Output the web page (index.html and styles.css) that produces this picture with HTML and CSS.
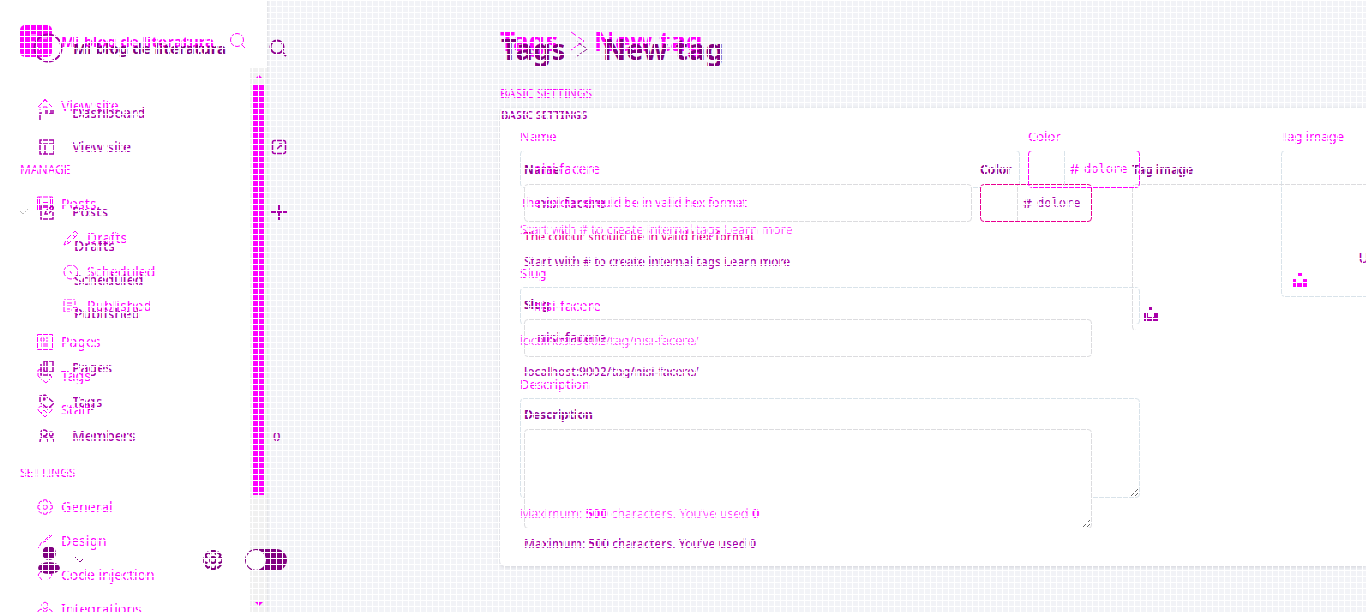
FILE: index.html
```html
<!DOCTYPE html>
<html lang="en">
<head>
<meta charset="utf-8">
<title>Tags - New tag</title>
<link rel="stylesheet" href="styles.css">
</head>
<body>
<svg width="0" height="0" class="defs" aria-hidden="true">
  <symbol id="search" viewBox="0 0 18 18"><circle cx="8" cy="8" r="6.5"/><path d="M13 13l4 4"/></symbol>
  <symbol id="home" viewBox="0 0 16 16"><path d="M1 9l7-7 7 7M4 6l4-5 4 5M3 9v3M6 11v-2h4v2"/></symbol>
  <symbol id="dash" viewBox="0 0 16 16"><path d="M1 15V8h3M7 5v4M9 5v4h3V5M12 9h2V5"/></symbol>
  <symbol id="layout" viewBox="0 0 16 16"><path d="M1 1h14v14H1zM1 5h14M6 5v10"/></symbol>
  <symbol id="post" viewBox="0 0 16 16"><path d="M.5 15V1h15v14M2.500 15V1M13.500 15V1M6 6.500h6M4 11.500h8"/></symbol>
  <symbol id="compose" viewBox="0 0 16 16"><path d="M9 2H2v13h12V8M6 10l1-3 6-5 2 2-6 6z"/></symbol>
  <symbol id="pencil" viewBox="0 0 16 16"><path d="M1 15l2-5 9-9 3 3-9 9zM3 10l3 3M9 4l3 3"/></symbol>
  <symbol id="clock" viewBox="0 0 16 16"><circle cx="8" cy="8" r="7"/><path d="M7 7l1 2h2"/></symbol>
  <symbol id="published" viewBox="0 0 16 16"><path d="M12 7V2H1v12h6M4 5h6M4 8h5M4 11h3"/><circle cx="12" cy="12" r="3"/></symbol>
  <symbol id="page" viewBox="0 0 16 16"><path d="M.5.5h15v15H.5zM4 4h3v3H4zM9 4h3M9 7h3M4 10h8M4 12h8"/></symbol>
  <symbol id="pages" viewBox="0 0 16 16"><path d="M5 1h9v11H5zM2 4v11h10M8 1v11"/></symbol>
  <symbol id="tag" viewBox="0 0 16 16"><path d="M1 8V2l5-1 9 8-6 6z"/><circle cx="5" cy="5" r="1"/></symbol>
  <symbol id="staff" viewBox="0 0 16 16"><path d="M1 8c0-4 5-5 7-1 2-4 7-3 7 1l-7 7zM4 11l3-3 3 3"/></symbol>
  <symbol id="members" viewBox="0 0 16 16"><circle cx="5" cy="5" r="3"/><path d="M1 14c0-7 8-7 8 0"/><circle cx="12" cy="6" r="2"/><path d="M11 10c3-1 4 1 4 4"/></symbol>
  <symbol id="cog" viewBox="0 0 16 16"><path d="M6.500.8h3l.6 2.200 2-1 2 2-1 2 2.200.6v3l-2.200.6 1 2-2 2-2-1-.6 2h-3l-.6-2-2 1-2-2 1-2-2-.6v-3l2-.6-1-2 2-2 2 1z"/><circle cx="8" cy="8" r="2.400"/></symbol>
  <symbol id="brush" viewBox="0 0 16 16"><path d="M7 8l7-7 1 1-7 7zM7 9c-4-1-3 4-6 6"/></symbol>
  <symbol id="code" viewBox="0 0 16 16"><path d="M5 3L1 8l4 5M11 3l4 5-4 5"/></symbol>
  <symbol id="modules" viewBox="0 0 16 16"><path d="M8 1l3 2v3L8 8 5 6V3zM4 8l3 2v3l-3 2-3-2v-3zM12 8l3 2v3l-3 2-3-2v-3z"/></symbol>
  <symbol id="external" viewBox="0 0 16 16"><rect x="1.500" y="1.500" width="13" height="13" rx="2"/><path d="M6 10l5-5M8 5h3v3"/></symbol>
  <symbol id="plus" viewBox="0 0 16 16"><path d="M8 0v16M0 8h16"/></symbol>
  <symbol id="down" viewBox="0 0 12 12"><path d="M1 3l5 5 5-5"/></symbol>
  <symbol id="right" viewBox="0 0 16 20"><path d="M1 1l13 9-13 9"/></symbol>
  <symbol id="camera" viewBox="0 0 14 14"><path d="M5 0h4v3H5zM0 6h4v4h6V6h4v8H0z"/></symbol>
</svg>

<div class="stage">
  <div class="screen old">
    <aside class="sidebar">
      <header class="brand">
        <svg class="logo" viewBox="0 0 32 32"><rect width="32" height="32" rx="5"/><path d="M11 10h5M11 17h4M23 13h4M17 22l3 3"/></svg>
        <strong>Mi blog de literatura</strong>
        <button class="icon-button" aria-label="Search"><svg class="icon"><use href="#search"/></svg></button>
      </header>
      <div class="scroller">
        <nav class="menu">
          <a href="#"><svg class="icon"><use href="#home"/></svg>View site</a>
          <h2>MANAGE</h2>
          <a href="#"><svg class="icon"><use href="#post"/></svg>Posts</a>
          <a href="#" class="sub"><svg class="icon"><use href="#pencil"/></svg>Drafts</a>
          <a href="#" class="sub"><svg class="icon"><use href="#clock"/></svg>Scheduled</a>
          <a href="#" class="sub last"><svg class="icon"><use href="#published"/></svg>Published</a>
          <a href="#"><svg class="icon"><use href="#page"/></svg>Pages</a>
          <a href="#"><svg class="icon"><use href="#tag"/></svg>Tags</a>
          <a href="#"><svg class="icon"><use href="#staff"/></svg>Staff</a>
          <h2 class="settings">SETTINGS</h2>
          <a href="#"><svg class="icon"><use href="#cog"/></svg>General</a>
          <a href="#"><svg class="icon"><use href="#brush"/></svg>Design</a>
          <a href="#"><svg class="icon"><use href="#code"/></svg>Code injection</a>
          <a href="#"><svg class="icon"><use href="#modules"/></svg>Integrations</a>
        </nav>
        <div class="scrollbar"><i class="arrow up"></i><i class="thumb"></i><i class="arrow"></i></div>
      </div>
    </aside>
    <main class="content">
      <h1><a href="#">Tags</a><svg class="crumb"><use href="#right"/></svg>New tag</h1>
      <h2 class="section">BASIC SETTINGS</h2>
      <form class="card">
        <div class="fields">
          <div class="pair">
            <div><label for="a-name">Name</label><div class="box"><input id="a-name" value="nisi facere"></div></div>
            <div><label for="a-color">Color</label><div class="box color"><span class="swatch"></span><span>#</span><input id="a-color" value="dolore"></div></div>
          </div>
          <p class="help first error">The colour should be in valid hex format</p>
          <p class="help">Start with # to create internal tags <a href="#">Learn more</a></p>
          <label class="next" for="a-slug">Slug</label><div class="box"><input id="a-slug" value="nisi-facere"></div>
          <p class="help first">localhost:9002/tag/nisi-facere/</p>
          <label class="next" for="a-desc">Description</label><div class="box area"><textarea id="a-desc"></textarea></div>
          <p class="help first">Maximum: <b>500</b> characters. You’ve used <b class="count">0</b></p>
        </div>
        <div class="picture"><label for="a-image">Tag image</label><button type="button" id="a-image" class="drop" aria-label="Tag image"><svg class="camera"><use href="#camera"/></svg></button></div>
      </form>
    </main>
  </div>

  <div class="screen new">
    <aside class="sidebar">
      <header class="brand">
        <svg class="ring" viewBox="0 0 30 30"><circle cx="15" cy="15" r="13.5"/></svg>
        <strong>Mi blog de literatura</strong>
        <button class="icon-button" aria-label="Search"><svg class="icon"><use href="#search"/></svg></button>
      </header>
      <nav class="menu">
        <a href="#"><svg class="icon"><use href="#dash"/></svg>Dashboard</a>
        <a href="#"><svg class="icon"><use href="#layout"/></svg>View site<svg class="icon end"><use href="#external"/></svg></a>
        <a href="#" class="group"><svg class="toggle"><use href="#down"/></svg><svg class="icon"><use href="#compose"/></svg>Posts<svg class="icon end plus"><use href="#plus"/></svg></a>
        <a href="#" class="sub">Drafts</a>
        <a href="#" class="sub">Scheduled</a>
        <a href="#" class="sub last">Published</a>
        <a href="#"><svg class="icon"><use href="#pages"/></svg>Pages</a>
        <a href="#"><svg class="icon"><use href="#tag"/></svg>Tags</a>
        <a href="#"><svg class="icon"><use href="#members"/></svg>Members<span class="end number">0</span></a>
      </nav>
      <footer class="account">
        <svg class="user" viewBox="0 0 24 30"><circle cx="12" cy="8" r="7"/><ellipse cx="12" cy="23" rx="11" ry="6"/></svg>
        <svg class="caret"><use href="#down"/></svg>
        <button class="icon-button gear" aria-label="Settings"><svg class="icon"><use href="#cog"/></svg></button>
        <input type="checkbox" class="switch" aria-label="Dark mode">
      </footer>
    </aside>
    <main class="content">
      <h1><a href="#">Tags</a><svg class="crumb"><use href="#right"/></svg>New tag</h1>
      <h2 class="section">BASIC SETTINGS</h2>
      <form class="card">
        <div class="fields">
          <div class="pair">
            <div><label for="b-name">Name</label><div class="box"><input id="b-name" value="nisi facere"></div></div>
            <div><label for="b-color">Color</label><div class="box color"><span class="swatch"></span><span>#</span><input id="b-color" value="dolore"></div></div>
          </div>
          <p class="help first error">The colour should be in valid hex format</p>
          <p class="help">Start with # to create internal tags <a href="#">Learn more</a></p>
          <label class="next" for="b-slug">Slug</label><div class="box"><input id="b-slug" value="nisi-facere"></div>
          <p class="help first">localhost:9002/tag/nisi-facere/</p>
          <label class="next" for="b-desc">Description</label><div class="box area"><textarea id="b-desc"></textarea></div>
          <p class="help first">Maximum: <b>500</b> characters. You’ve used <b class="count">0</b></p>
        </div>
        <div class="picture"><label for="b-image">Tag image</label><button type="button" id="b-image" class="drop">Upload tag image<svg class="camera"><use href="#camera"/></svg></button></div>
      </form>
    </main>
  </div>
</div>
</body>
</html>
```
FILE: styles.css
```css
* { box-sizing: border-box; }
body {
  margin: 0;
  height: 100vh;
  overflow: hidden;
  background: #f2f3f7;
  font: 14px/20px "Noto Sans", "Open Sans", sans-serif;
}
/* fine white mesh over the whole comparison */
body::after {
  content: "";
  position: fixed;
  inset: 0;
  z-index: 9;
  pointer-events: none;
  background:
    repeating-linear-gradient(90deg, #fff 0 1px, transparent 1px 6px),
    repeating-linear-gradient(#fff 0 1px, transparent 1px 6px);
}
.defs { position: absolute; }
h1, h2, p { margin: 0; }
a { color: inherit; text-decoration: none; }
button, input, textarea { font: inherit; color: inherit; border: 0; padding: 0; background: none; outline: 0; }

.stage { display: grid; grid-template: 100vh / 100%; overflow: hidden; }
.screen { grid-area: 1 / 1; display: grid; min-width: 0; height: 100vh; overflow: hidden; }
.old { grid-template-columns: 267px minmax(0, 1fr); color: #f0f; --line: #d9e3ea; }
.new { grid-template-columns: 320px minmax(0, 1fr); color: #a800a8; --line: #dcdcdf; font-weight: 500; }
.icon { width: 16px; height: 16px; flex: none; }
svg { fill: none; stroke: currentColor; }
.new .icon { stroke-width: 1.5; }

/* sidebar */
.sidebar { display: flex; flex-direction: column; min-height: 0; height: 100vh; }
.old .sidebar { background: #fff; box-shadow: 1px 0 2px #dfe0e4; }
.brand { display: flex; align-items: center; flex: none; }
.old .brand { height: 68px; padding: 14px 20px 0; gap: 9px; }
.new .brand { height: 96px; padding: 0 33px; gap: 10px; }
.brand strong { font-size: 15px; font-weight: 700; white-space: nowrap; }
.new .brand strong { color: #800080; }
.logo { width: 32px; height: 32px; fill: #f0f; stroke: #fff; flex: none; }
.logo rect { stroke: none; }
.ring { width: 30px; height: 30px; stroke: #a000a0; stroke-width: 2; flex: none; }
.icon-button { display: flex; margin-left: auto; }
.brand .icon { width: 18px; height: 18px; }
.new .brand .icon { stroke-width: 2; color: #900090; }
.scroller { display: flex; flex: 1; min-height: 0; }
.menu { flex: 1; min-width: 0; overflow: hidden; }
.old .menu { padding-top: 21px; }
.menu a { display: flex; align-items: center; height: 34px; gap: 8px; }
.old .menu a { padding-left: 37px; }
.old .menu .sub { padding-left: 63px; }
.old .menu .last { margin-bottom: 2px; }
.menu h2 { margin-top: 30px; padding-left: 20px; font-size: 12px; line-height: 34px; font-weight: 400; }
.menu .settings { margin-top: 29px; }
.new .menu { flex: none; }
.new .menu a { padding: 0 33px 0 39px; gap: 17px; }
.new .menu .group { margin-top: 31px; padding-left: 17px; gap: 10px; }
.new .group .icon { margin-right: 7px; }
.new .menu .sub { padding-left: 74px; }
.new .menu .last { margin-bottom: 20px; }
.menu .end { margin-left: auto; }
.new .group .end { margin-right: 0; }
.new .plus { stroke-width: 2; }
.number { width: 14px; font-size: 13px; }
.toggle { width: 12px; height: 12px; stroke: #bbb; }
.scrollbar { width: 17px; display: flex; flex-direction: column; align-items: center; background: #f1f1f1; }
.thumb { width: 11px; height: 410px; background: #f0f; }
.arrow { margin-top: auto; height: 17px; display: grid; place-items: center; }
.arrow::before { content: ""; border: 4px solid transparent; border-top-color: #f0f; border-bottom: 0; }
.arrow.up { margin: 0; }
.arrow.up::before { transform: rotate(180deg); }
.account { display: flex; align-items: center; margin-top: auto; padding: 0 33px 35px 37px; color: #800080; height: 70px; }
.user { width: 24px; height: 30px; fill: #800080; stroke: none; }
.caret { width: 12px; height: 12px; margin-left: 13px; }
.gear .icon { width: 20px; height: 20px; stroke-width: 1.5; }
.switch { appearance: none; margin: 0 0 0 22px; width: 42px; height: 22px; border-radius: 11px; background: #800080; }
.switch::before { content: ""; display: block; width: 20px; height: 20px; margin: 1px; border-radius: 50%; background: #fff; }

/* form area */
.content { min-width: 0; overflow: hidden; }
.old .content { padding: 23px 0 0 233px; }
.new .content { padding: 31px 0 0 181px; }
h1 { display: flex; align-items: center; height: 36px; font-size: 26px; font-weight: 700; }
.new h1 { font-size: 29px; color: #800080; }
.crumb { width: 16px; height: 20px; margin: 0 8px 0 12px; }
.new .crumb { width: 14px; margin: 0 14px 0 9px; }
.section { font-size: 12px; font-weight: 400; }
.old .section { margin: 25px 0 4px; }
.new .section { margin: 38px 0 0; font-weight: 600; font-size: 11px; }
.card { display: grid; }
.old .card { grid-template-columns: 620px minmax(0, 1fr); gap: 141px; padding: 18px 0 40px 20px; background: #fff; border-radius: 5px 0 0 5px; box-shadow: 0 1px 4px #d0d2d8; }
.new .card { grid-template-columns: 568px minmax(0, 1fr); gap: 40px; padding: 35px 0 0 23px; }
.pair { display: grid; grid-template-columns: minmax(0, 1fr) 112px; gap: 8px; }
label { display: block; margin-bottom: 4px; font-size: 13px; }
.new label { font-weight: 700; font-size: 12px; color: #900090; }
.next { margin-top: 21px; }
.old label, .old .help, .old input, .old .color { position: relative; z-index: 3; }
.box { display: flex; height: 38px; border: 1px solid var(--line); border-radius: 4px; }
.new .box { background: #fff; }
.box input { flex: 1; min-width: 0; padding: 0 12px; }
.box.area { height: 100px; }
.box textarea { width: 100%; height: 100%; resize: vertical; }
.box.color { align-items: center; gap: 5px; border-color: #f0f; }
.new .box.color { border-color: #e80090; }
.color input { padding: 0; font: 12px "DejaVu Sans Mono", monospace; }
.color .swatch { width: 36px; height: 36px; border-right: 1px solid var(--line); }
.new .swatch { width: 37px; }
.help { font-size: 13px; line-height: 26px; white-space: nowrap; }
.old .help { font-weight: 300; }
.old .first { margin-top: 2px; }
.new .help { font-size: 12px; line-height: 24px; }
.new .first { margin-top: 3px; }
.new .help + .help { margin-top: 1px; }
.help b { font-weight: 700; }
.help .count { font-weight: 600; }
.old .error { font-size: 12px; font-weight: 400; }
.new .error { color: #e80090; }
.drop { display: grid; place-items: center; position: relative; width: 572px; height: 147px; border: 1px solid var(--line); border-radius: 4px; }
.camera { position: absolute; left: 11px; bottom: 9px; width: 14px; height: 14px; fill: currentColor; stroke: none; }
```
